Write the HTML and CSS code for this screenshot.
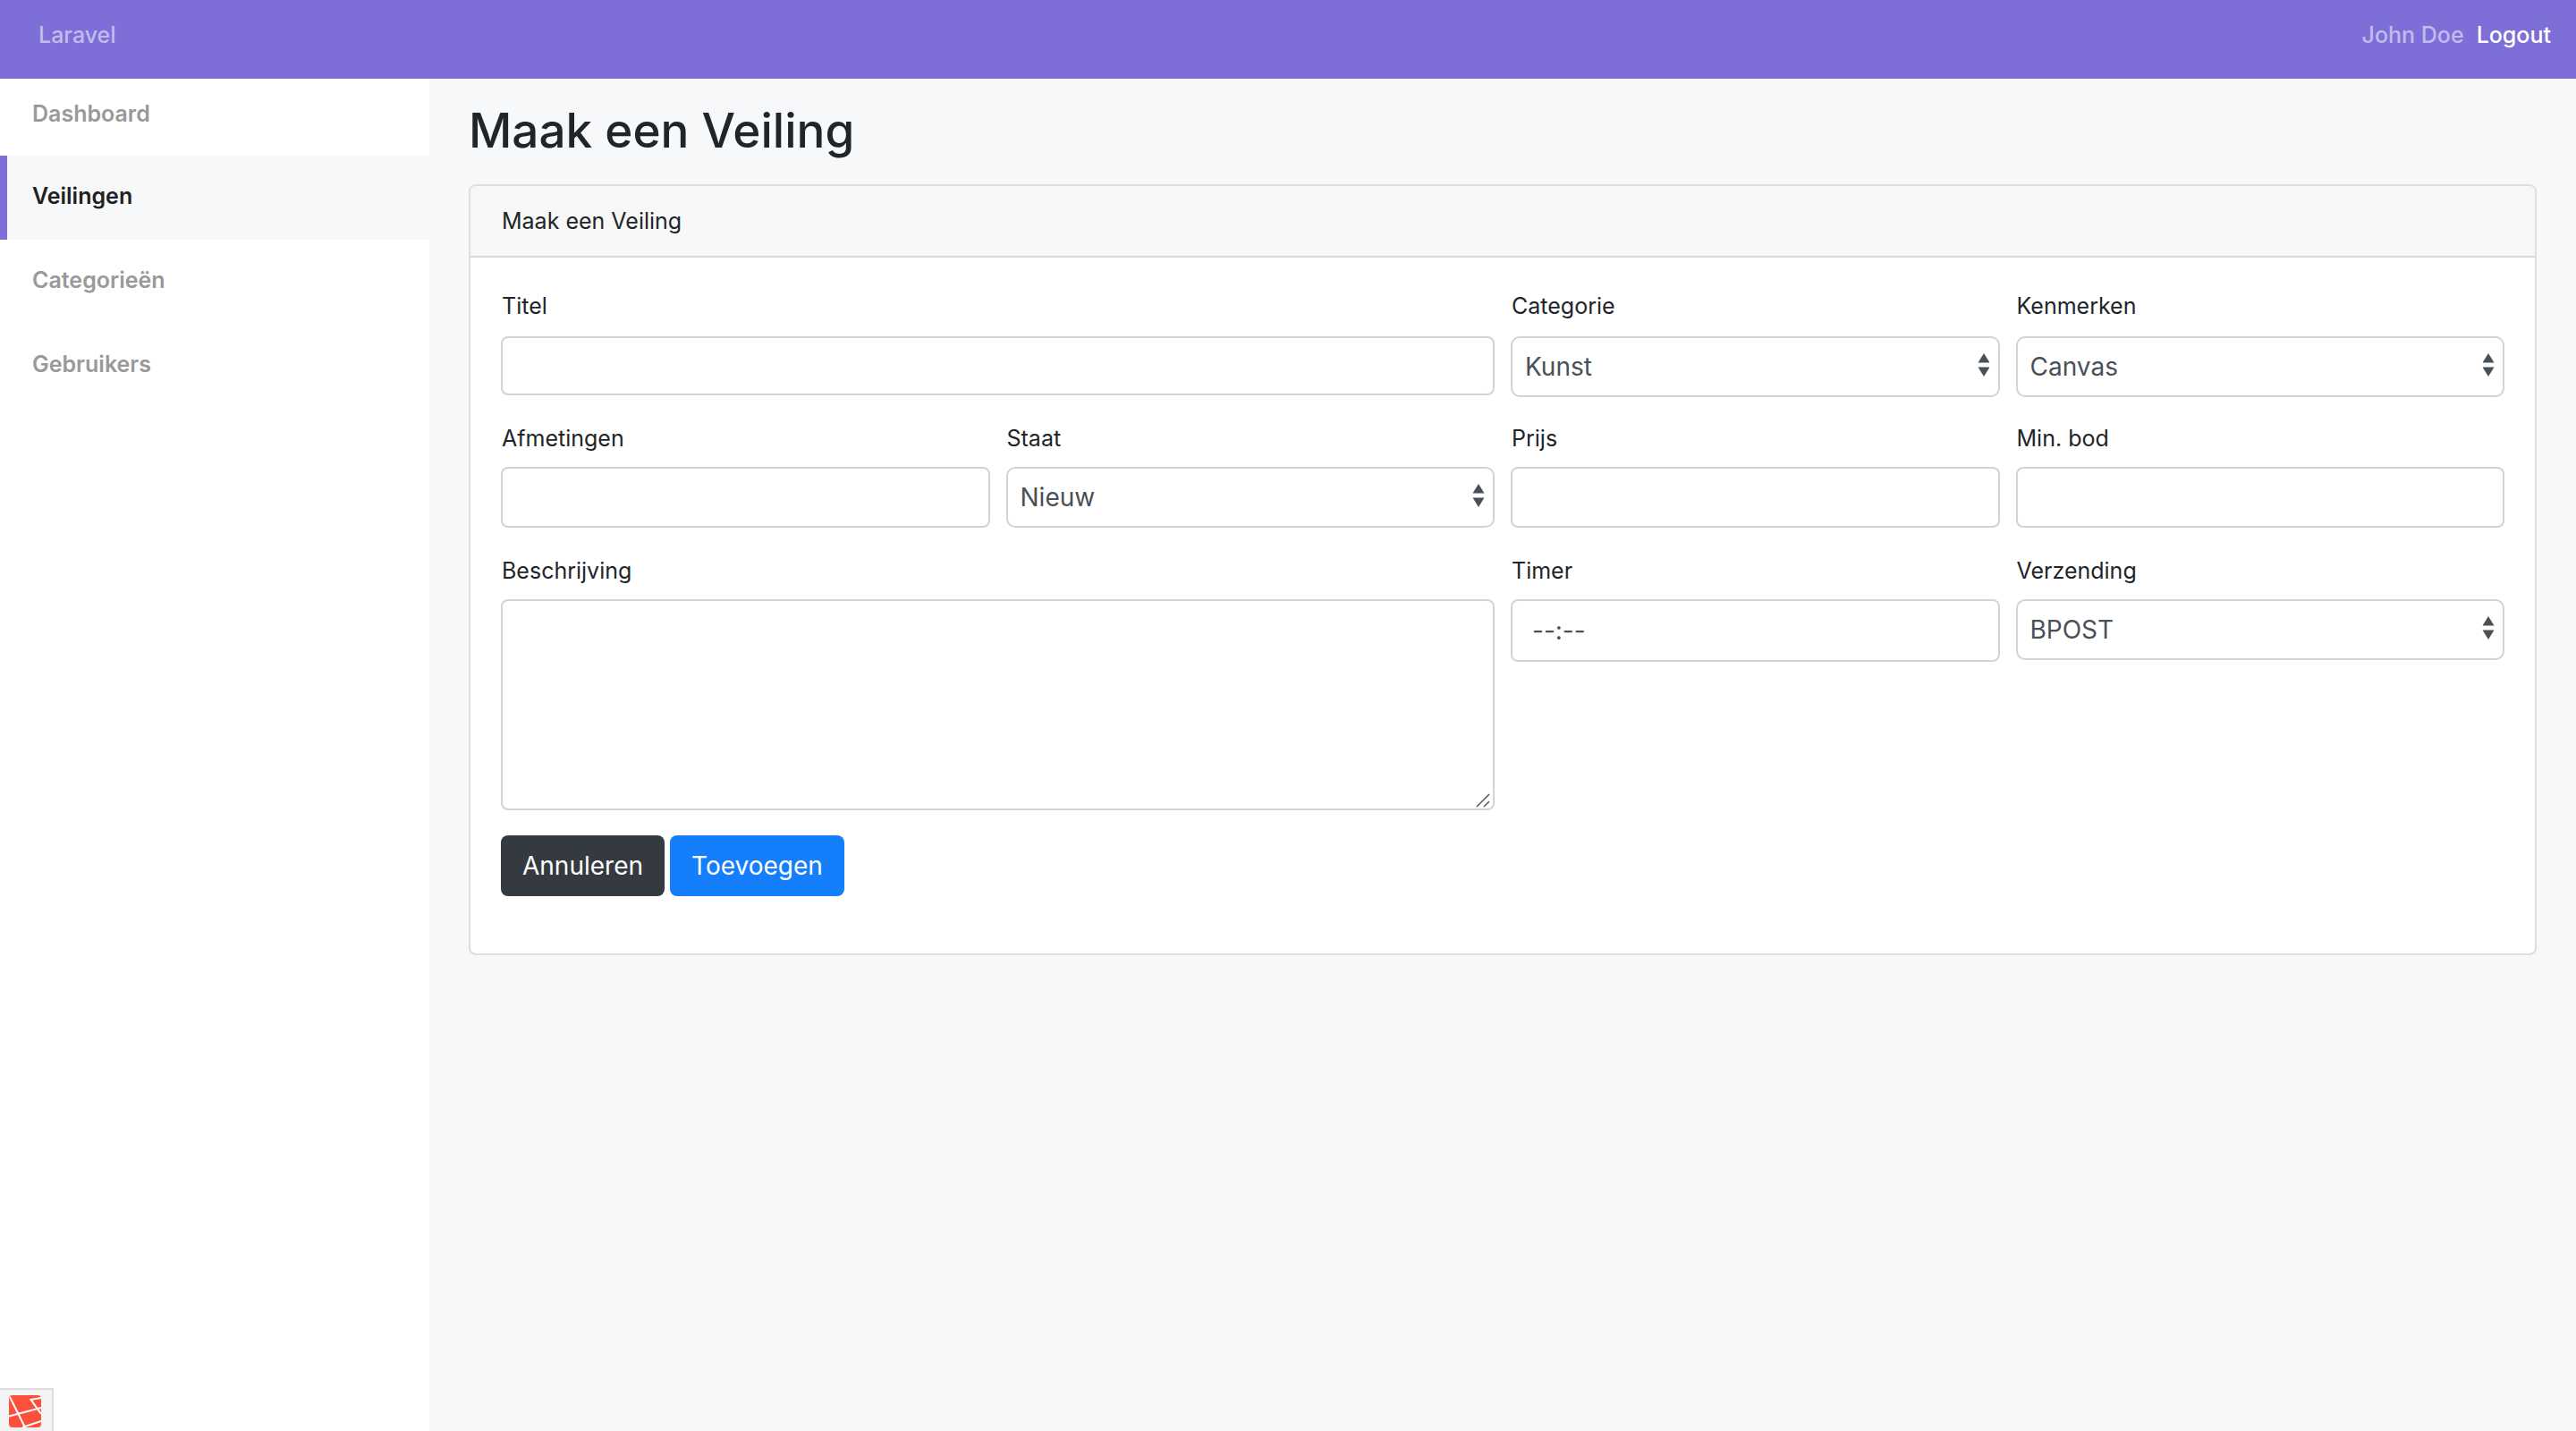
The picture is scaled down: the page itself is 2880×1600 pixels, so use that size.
FILE: index.html
```html
<!DOCTYPE html>
<html lang="nl">
<head>
  <meta charset="utf-8">
  <meta name="viewport" content="width=device-width, initial-scale=1">
  <title>Maak een Veiling</title>
  <link rel="stylesheet" href="styles.css">
</head>
<body>
  <header class="topbar">
    <a class="brand" href="#">Laravel</a>
    <div class="account">
      <span class="account-name">John Doe</span>
      <a class="logout" href="#">Logout</a>
    </div>
  </header>
  <div class="layout">
    <nav class="sidebar">
      <a class="nav-link" href="#">Dashboard</a>
      <a class="nav-link active" href="#">Veilingen</a>
      <a class="nav-link" href="#">Categorieën</a>
      <a class="nav-link" href="#">Gebruikers</a>
    </nav>
    <main class="content">
      <h1 class="page-title">Maak een Veiling</h1>
      <section class="card">
        <div class="card-header">Maak een Veiling</div>
        <form class="card-body">
          <div class="form-row lead">
            <div class="field wide">
              <label for="titel">Titel</label>
              <input class="control short" id="titel" type="text">
            </div>
            <div class="field">
              <label for="categorie">Categorie</label>
              <select class="control select" id="categorie"><option>Kunst</option></select>
            </div>
            <div class="field">
              <label for="kenmerken">Kenmerken</label>
              <select class="control select" id="kenmerken"><option>Canvas</option></select>
            </div>
          </div>
          <div class="form-row">
            <div class="field">
              <label for="afmetingen">Afmetingen</label>
              <input class="control" id="afmetingen" type="text">
            </div>
            <div class="field">
              <label for="staat">Staat</label>
              <select class="control select" id="staat"><option>Nieuw</option></select>
            </div>
            <div class="field">
              <label for="prijs">Prijs</label>
              <input class="control" id="prijs" type="text">
            </div>
            <div class="field">
              <label for="minbod">Min. bod</label>
              <input class="control" id="minbod" type="text">
            </div>
          </div>
          <div class="form-row">
            <div class="field wide">
              <label for="beschrijving">Beschrijving</label>
              <textarea class="control area" id="beschrijving"></textarea>
            </div>
            <div class="field">
              <label for="timer">Timer</label>
              <input class="control time" id="timer" type="text" value="--:--">
            </div>
            <div class="field">
              <label for="verzending">Verzending</label>
              <select class="control select" id="verzending"><option>BPOST</option></select>
            </div>
          </div>
          <div class="actions">
            <button class="btn dark" type="button">Annuleren</button>
            <button class="btn primary" type="submit">Toevoegen</button>
          </div>
        </form>
      </section>
    </main>
  </div>
  <button class="debugbar" type="button" aria-label="Debugbar">
    <svg class="debug-icon" viewBox="0 0 36 36" aria-hidden="true">
      <rect width="36" height="36" rx="4" fill="#fb503b"/>
      <path d="M1 2 18 36M0 23.500 36 14M15 36 36 29M36 3 24.500 5 36 21" fill="none" stroke="#fff" stroke-width="2"/>
    </svg>
  </button>
</body>
</html>
```
FILE: styles.css
```css
* { box-sizing: border-box; }

body {
  margin: 0;
  min-height: 100vh;
  display: flex;
  flex-direction: column;
  background: #f7f8fa;
  color: #212529;
  font-family: Inter, "Liberation Sans", sans-serif;
  font-size: 25px;
  line-height: 32px;
}

a { text-decoration: none; }

.topbar {
  display: flex;
  justify-content: space-between;
  height: 88px;
  padding: 23px 28px 0 43px;
  background: #7e6fd8;
  font-weight: 500;
}
.brand, .account-name { color: #c2bbed; }
.account { display: flex; gap: 14px; }
.logout { color: #fff; }

.layout { flex: 1; display: flex; }

.sidebar {
  width: 480px;
  flex: none;
  background: #fff;
}
.nav-link {
  display: block;
  height: 94px;
  padding: 29px 36px;
  color: #999;
  font-weight: 600;
}
.nav-link:first-child { height: 86px; padding-top: 23px; }
.nav-link.active {
  padding-left: 28px;
  border-left: 8px solid #7e6fd8;
  background: #f7f8fa;
  color: #212121;
}

.content { flex: 1; min-width: 0; padding: 24px 44px; }

.page-title {
  margin: 0 0 26px;
  font-size: 53px;
  line-height: 68px;
  font-weight: 500;
}

.card {
  border: 2px solid #dddee0;
  border-radius: 8px;
  background: #fff;
}
.card-header {
  padding: 23px 35px;
  border-bottom: 2px solid #d7d7d7;
  border-radius: 6px 6px 0 0;
  background: #f7f7f7;
}
.card-body { padding: 38px 34px 64px; }

.form-row {
  display: grid;
  grid-template-columns: repeat(4, minmax(0, 1fr));
  column-gap: 18px;
  align-items: start;
  margin-bottom: 32px;
}
.form-row.lead { margin-bottom: 30px; }
.field { display: flex; flex-direction: column; gap: 16px; }
.lead .field { gap: 18px; }
.wide { grid-column: span 2; }
.field label { padding-left: 1px; }

.control {
  width: 100%;
  height: 68px;
  margin: 0;
  padding: 0 22px;
  border: 2px solid #ced4da;
  border-radius: 8px;
  background: #fff;
  color: #495057;
  font: inherit;
  font-size: 28px;
}
.short { height: 66px; }
.time { height: 70px; }
.select {
  appearance: none;
  padding: 0 40px 0 14px;
  border-radius: 10px;
  background: #fff url("data:image/svg+xml,%3Csvg xmlns='http://www.w3.org/2000/svg' width='14' height='26'%3E%3Cpath d='M7 0l6.500 10.500h-13zM.5 15.500h13L7 26z' fill='%23495057'/%3E%3C/svg%3E") no-repeat right 9px top 17px;
}
.area {
  height: 236px;
  resize: none;
  background: #fff url("data:image/svg+xml,%3Csvg xmlns='http://www.w3.org/2000/svg' width='16' height='16'%3E%3Cpath d='M1 15L15 1M9 15l6-6' stroke='%23555' stroke-width='1.500'/%3E%3C/svg%3E") no-repeat right 3px bottom 1px;
}

.actions { display: flex; gap: 6px; margin-top: -4px; }
.btn {
  height: 68px;
  padding: 0 24px;
  border: 0;
  border-radius: 8px;
  color: #fff;
  font: inherit;
  font-size: 28px;
}
.dark { background: #343a40; }
.primary { background: #157efb; }

.debugbar {
  position: fixed;
  left: 0;
  bottom: 0;
  width: 60px;
  height: 48px;
  padding: 6px 10px;
  border: solid #ddd;
  border-width: 2px 2px 0 0;
  background: #f3f3f3;
}
.debug-icon { display: block; width: 36px; height: 36px; }
```
